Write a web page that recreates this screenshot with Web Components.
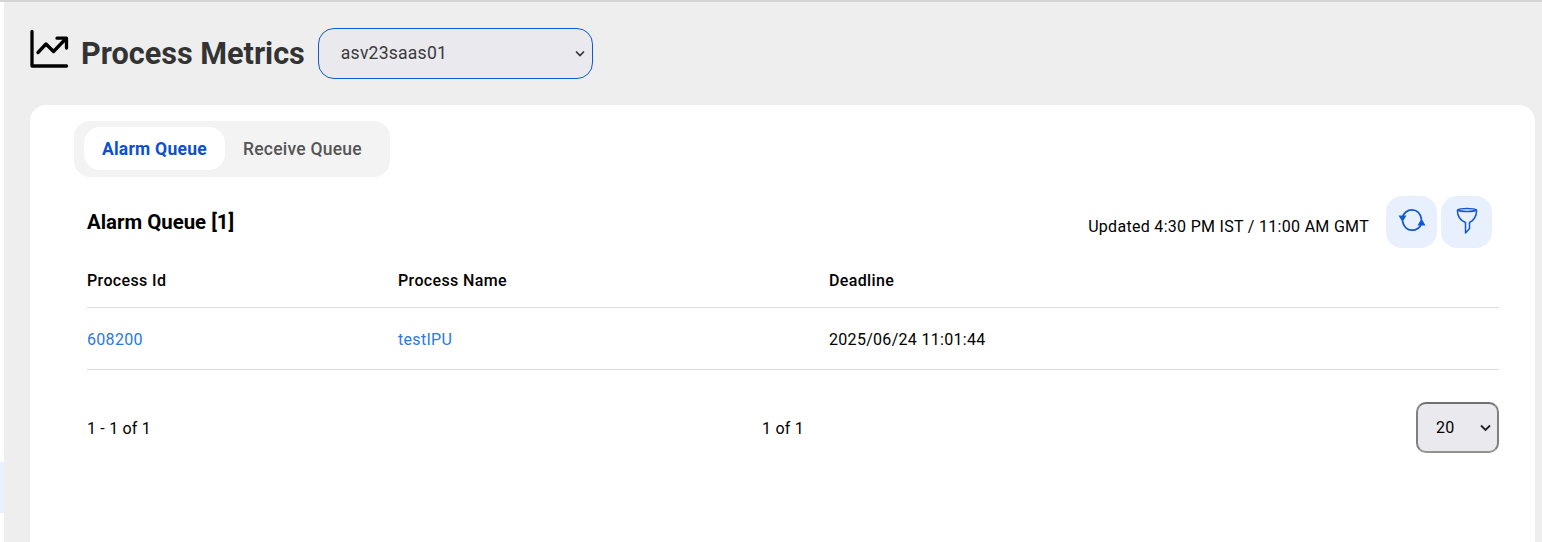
<!DOCTYPE html>
<html><head><meta charset="utf-8"><style>
html,body{margin:0;padding:0;height:542px;overflow:hidden;background:#fff;font-family:Roboto,sans-serif}
</style></head><body>
<template id="t-shell"><style>
:host{display:grid;grid-template-columns:4px 1fr;height:542px;overflow:hidden;border-top:2px solid #d4d4d4;box-sizing:border-box}
.rail{display:flex;flex-direction:column;padding-top:460px;background:#fff}
.rail i{display:block;height:51px;background:#e9f0fd}
.main{background:#eeeeee;padding:26px 7px 0 26px;min-width:0}
</style><div class="rail"><i></i></div><div class="main"><slot></slot></div></template>

<template id="t-header"><style>
:host{display:flex;align-items:center;height:51px;margin-bottom:26px}
svg{width:40px;height:40px;display:block;margin-right:11px;margin-top:-9px}
h1{margin:0 13px 0 0;font:700 30.600px/34px Roboto,sans-serif;color:#333;white-space:nowrap}
</style><svg viewBox="0 0 40 40" fill="none" stroke="#000" stroke-width="3.300" stroke-linecap="round" stroke-linejoin="round"><path d="M2 2.500V37H36.500"/><path d="M8 23.500L16 15L23.500 22.500L36 9.500M27 9.200H36.500V19"/></svg><h1><slot></slot></h1><slot name="control"></slot></template>

<template id="t-select"><style>
:host{display:block;position:relative;box-sizing:border-box;width:275px;height:51px;border:1px solid #0b5cd5;border-radius:16px;background:#e9e9ee;font:400 17.600px/49px Roboto,sans-serif;letter-spacing:.2px;color:#3b3b3b;padding-left:22px}
svg{position:absolute;right:7px;top:21px;width:10px;height:8px}
</style><slot></slot><svg viewBox="0 0 10 8" fill="none" stroke="#333" stroke-width="1.600"><path d="M1 1.500L5 5.500L9 1.500"/></svg></template>

<template id="t-card"><style>
:host{display:block;background:#fff;border-radius:16px;padding:16px 36px 0 57px;height:460px;box-sizing:border-box}
</style><slot></slot></template>

<template id="t-tabs"><style>
:host{display:inline-flex;box-sizing:border-box;margin-left:-13px;height:56px;padding:6px 10px 7px;background:#f3f3f3;border-radius:16px;align-items:stretch}
</style><slot></slot></template>

<template id="t-tab"><style>
:host{display:flex;align-items:center;padding:0 18px;border-radius:16px;font:500 17.500px/20px Roboto,sans-serif;letter-spacing:.24px;color:#555;white-space:nowrap}
:host([active]){background:#fff;color:#0b50d0;font-weight:700}
</style><slot></slot></template>

<template id="t-bar"><style>
:host{display:flex;justify-content:space-between;align-items:center;height:51px;margin-top:19px}
h2{margin:1px 0 0;font:700 20.400px/24px Roboto,sans-serif;color:#000}
.r{display:flex;align-items:center;gap:4px;margin-right:7px}
.u{font-size:16px;letter-spacing:.3px;color:#000;margin:10px 13px 0 0}
</style><h2><slot name="title"></slot></h2><div class="r"><span class="u"><slot name="updated"></slot></span><slot></slot></div></template>

<template id="t-btn"><style>
:host{display:flex;align-items:center;justify-content:center;width:51px;height:52px;border-radius:16px;background:#e9f0fd}
::slotted(svg){margin-top:-4px}
</style><slot></slot></template>

<template id="t-table"><style>
:host{display:block;font-size:16px;color:#000;margin-top:8px}
</style><slot></slot></template>

<template id="t-row"><style>
:host{display:grid;grid-template-columns:311px 431px 1fr;align-items:center;height:59px;padding-top:2px;border-bottom:1px solid #dcdcdc;font:400 16px/20px Roboto,sans-serif;letter-spacing:.3px}
:host([head]){font-weight:500;align-items:start;padding-top:16px;height:36px;letter-spacing:.36px}
</style><slot></slot></template>

<template id="t-link"><style>:host{color:#2a78e4}</style><slot></slot></template>

<template id="t-pager"><style>
:host{display:grid;grid-template-columns:1fr auto 1fr;align-items:center;margin-top:32px;font:400 16px/20px Roboto,sans-serif;letter-spacing:.2px;color:#000}
.c{justify-self:end}
.t{padding-top:2px}
</style><div class="t"><slot name="range"></slot></div><div class="t" style="margin-right:20px"><slot name="page"></slot></div><div class="c"><slot></slot></div></template>

<template id="t-size"><style>
:host{display:block;position:relative;box-sizing:border-box;width:83px;height:51px;border:2px solid #808080;border-color:#707070 #808080 #939393;border-radius:10px;background:#e9e9ee;font:400 16px/47px Roboto,sans-serif;padding-left:18px;color:#000}
svg{position:absolute;right:6px;top:20px;width:11px;height:8px}
</style><slot></slot><svg viewBox="0 0 11 8" fill="none" stroke="#222" stroke-width="1.800"><path d="M1 1.500L5.500 6L10 1.500"/></svg></template>

<pm-shell>
<pm-header>Process Metrics<pm-select slot="control">asv23saas01</pm-select></pm-header>
<pm-card>
<pm-tabs><pm-tab active>Alarm Queue</pm-tab><pm-tab>Receive Queue</pm-tab></pm-tabs>
<pm-bar><span slot="title">Alarm Queue [1]</span><span slot="updated">Updated 4:30 PM IST / 11:00 AM GMT</span>
<pm-btn><svg width="28" height="26" viewBox="0 0 28 26" fill="none" stroke="#1259d0" stroke-width="1.800"><path d="M4.500 10.500C5.500 6 9.500 2.800 14 2.800C18.500 2.800 22.500 6 23.500 12.500"/><path d="M23.500 16.500C22.500 20 18.500 23.200 14 23.200C9.500 23.200 5.500 20 4.500 14"/><path d="M0.500 8.500H8.500L4.500 15Z" fill="#1259d0" stroke="none"/><path d="M27.500 18.500H19.500L23.500 11.500Z" fill="#1259d0" stroke="none"/></svg></pm-btn>
<pm-btn><svg width="22" height="28" viewBox="0 0 22 28" fill="none" stroke="#1259d0" stroke-width="1.500" stroke-linejoin="round"><path d="M1.500 4C4 2 18 2 20.500 4C21 9.500 17.500 15 13.500 16.500V22.500L9.500 27V16.500C4.500 15 1 9.500 1.500 4Z"/><path d="M1.500 4C5 6 17 6 20.500 4"/></svg></pm-btn>
</pm-bar>
<pm-table>
<pm-row head><span>Process Id</span><span>Process Name</span><span>Deadline</span></pm-row>
<pm-row><pm-link>608200</pm-link><pm-link>testIPU</pm-link><span>2025/06/24 11:01:44</span></pm-row>
</pm-table>
<pm-pager><span slot="range">1 - 1 of 1</span><span slot="page">1 of 1</span><pm-size>20</pm-size></pm-pager>
</pm-card>
</pm-shell>
<script>
const names=['shell','header','select','card','tabs','tab','bar','btn','table','row','link','pager','size'];
for(const n of names){
  customElements.define('pm-'+n,class extends HTMLElement{
    constructor(){super();this.attachShadow({mode:'open'}).appendChild(document.getElementById('t-'+n).content.cloneNode(true));}
  });
}
</script>
</body></html>
